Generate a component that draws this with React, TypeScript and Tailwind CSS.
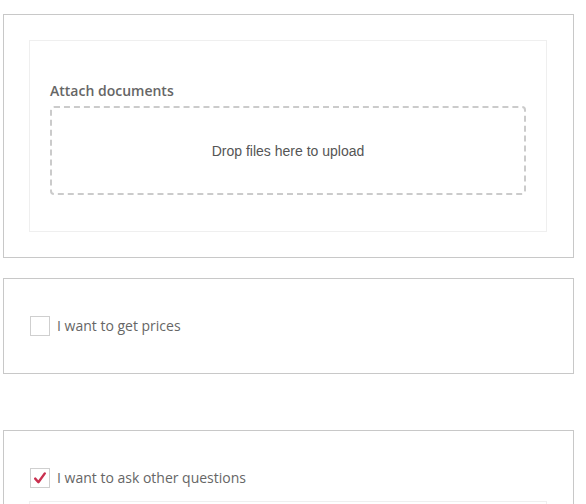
import React from "react";

function Check({ checked }: { checked?: boolean }) {
  return (
    <div className="w-[20px] h-[20px] border border-[#cfcfcf] bg-white flex items-center justify-center shrink-0">
      {checked && (
        <svg width="14" height="14" viewBox="0 0 14 14">
          <path d="M2.2 7.6 L5.4 11.2 L11.8 2.4" fill="none" stroke="#c9304f" strokeWidth="2.4" strokeLinecap="round" strokeLinejoin="round" />
        </svg>
      )}
    </div>
  );
}

export default function App() {
  return (
    <div className="w-[586px] h-[504px] overflow-hidden bg-white pl-[3px] pt-[14px]" style={{ fontFamily: "'Open Sans', sans-serif" }}>
      <div className="w-[571px] border border-[#c8c8c8] pt-[25px] pb-[25px] pl-[25px] pr-[26px]">
        <div className="border border-[#efefef] h-[192px] px-[20px] pt-[41px]">
          <div className="text-[14px] leading-[18px] font-semibold text-[#666]">Attach documents</div>
          <div className="mt-[6px] h-[89px] border-2 border-dashed border-[#cbcbcb] rounded-[4px] flex items-center justify-center pt-[2px]">
            <span className="text-[14px] text-[#555]" style={{ fontFamily: "'Liberation Sans', Arial, sans-serif" }}>Drop files here to upload</span>
          </div>
        </div>
      </div>
      <div className="w-[571px] h-[96px] mt-[20px] border border-[#c8c8c8] pt-[36px] pl-[26px]">
        <div className="flex items-center gap-[7px]">
          <Check />
          <span className="text-[14px] text-[#666]">I want to get prices</span>
        </div>
      </div>
      <div className="w-[571px] h-[120px] mt-[56px] border border-[#c8c8c8] pt-[36px] pl-[26px]">
        <div className="flex items-center gap-[7px]">
          <Check checked />
          <span className="text-[14px] text-[#666]">I want to ask other questions</span>
        </div>
        <div className="mt-[13px] ml-[-1px] mr-[26px] h-[60px] border border-[#efefef]" />
      </div>
    </div>
  );
}
